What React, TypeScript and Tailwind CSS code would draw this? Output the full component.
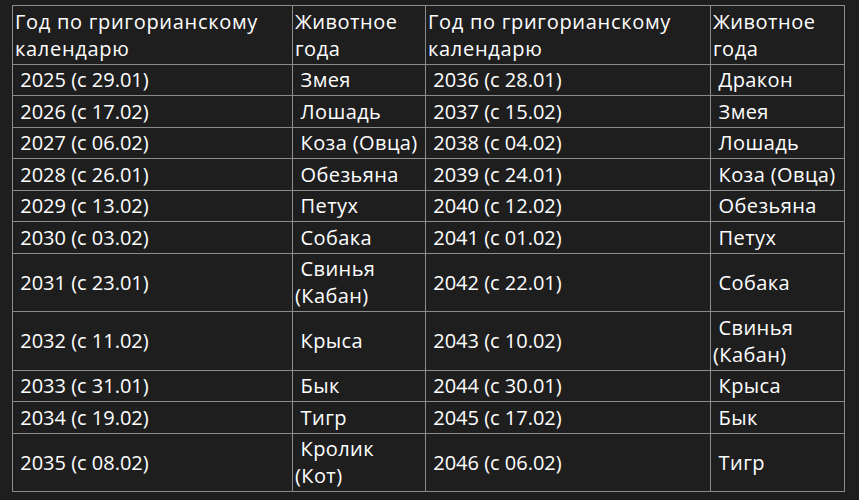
const rows: [string, string, string, string][] = [
  ["2025 (с 29.01)", "Змея", "2036 (с 28.01)", "Дракон"],
  ["2026 (с 17.02)", "Лошадь", "2037 (с 15.02)", "Змея"],
  ["2027 (с 06.02)", "Коза (Овца)", "2038 (с 04.02)", "Лошадь"],
  ["2028 (с 26.01)", "Обезьяна", "2039 (с 24.01)", "Коза (Овца)"],
  ["2029 (с 13.02)", "Петух", "2040 (с 12.02)", "Обезьяна"],
  ["2030 (с 03.02)", "Собака", "2041 (с 01.02)", "Петух"],
  ["2031 (с 23.01)", "Свинья|(Кабан)", "2042 (с 22.01)", "Собака"],
  ["2032 (с 11.02)", "Крыса", "2043 (с 10.02)", "Свинья|(Кабан)"],
  ["2033 (с 31.01)", "Бык", "2044 (с 30.01)", "Крыса"],
  ["2034 (с 19.02)", "Тигр", "2045 (с 17.02)", "Бык"],
  ["2035 (с 08.02)", "Кролик|(Кот)", "2046 (с 06.02)", "Тигр"],
];

function Cell({ text, animal }: { text: string; animal: boolean }) {
  const parts = text.split("|");
  return (
    <td
      className={
        "border border-[#8c8c8c] px-[2px] py-[1.75px] align-middle " +
        (animal ? "tracking-[0.4px]" : "tracking-[0px]")
      }
    >
      {"\u00a0" + parts[0]}
      {parts[1] && (
        <>
          <br />
          {parts[1]}
        </>
      )}
    </td>
  );
}

const th = "border border-[#8c8c8c] px-[2px] py-[1.75px] text-left align-top font-normal";

export default function App() {
  return (
    <div
      className="min-h-screen w-full bg-[#1e1e1e] pl-[12px] pt-[5px] text-[20px] leading-[27px] text-white"
      style={{ fontFamily: '"Open Sans", "Noto Sans", sans-serif' }}
    >
      <table className="table-fixed border-collapse">
        <colgroup>
          <col className="w-[280px]" />
          <col className="w-[133px]" />
          <col className="w-[285px]" />
          <col className="w-[134px]" />
        </colgroup>
        <thead>
          <tr>
            <th className={th + " tracking-[0.7px]"}>
              Год по григорианскому<br />календарю
            </th>
            <th className={th + " tracking-[0.5px]"}>
              Животное<br />года
            </th>
            <th className={th + " tracking-[0.7px]"}>
              Год по григорианскому<br />календарю
            </th>
            <th className={th + " tracking-[0.5px]"}>
              Животное<br />года
            </th>
          </tr>
        </thead>
        <tbody>
          {rows.map((r) => (
            <tr key={r[0]}>
              {r.map((c, i) => (
                <Cell key={i} text={c} animal={i % 2 === 1} />
              ))}
            </tr>
          ))}
        </tbody>
      </table>
    </div>
  );
}
